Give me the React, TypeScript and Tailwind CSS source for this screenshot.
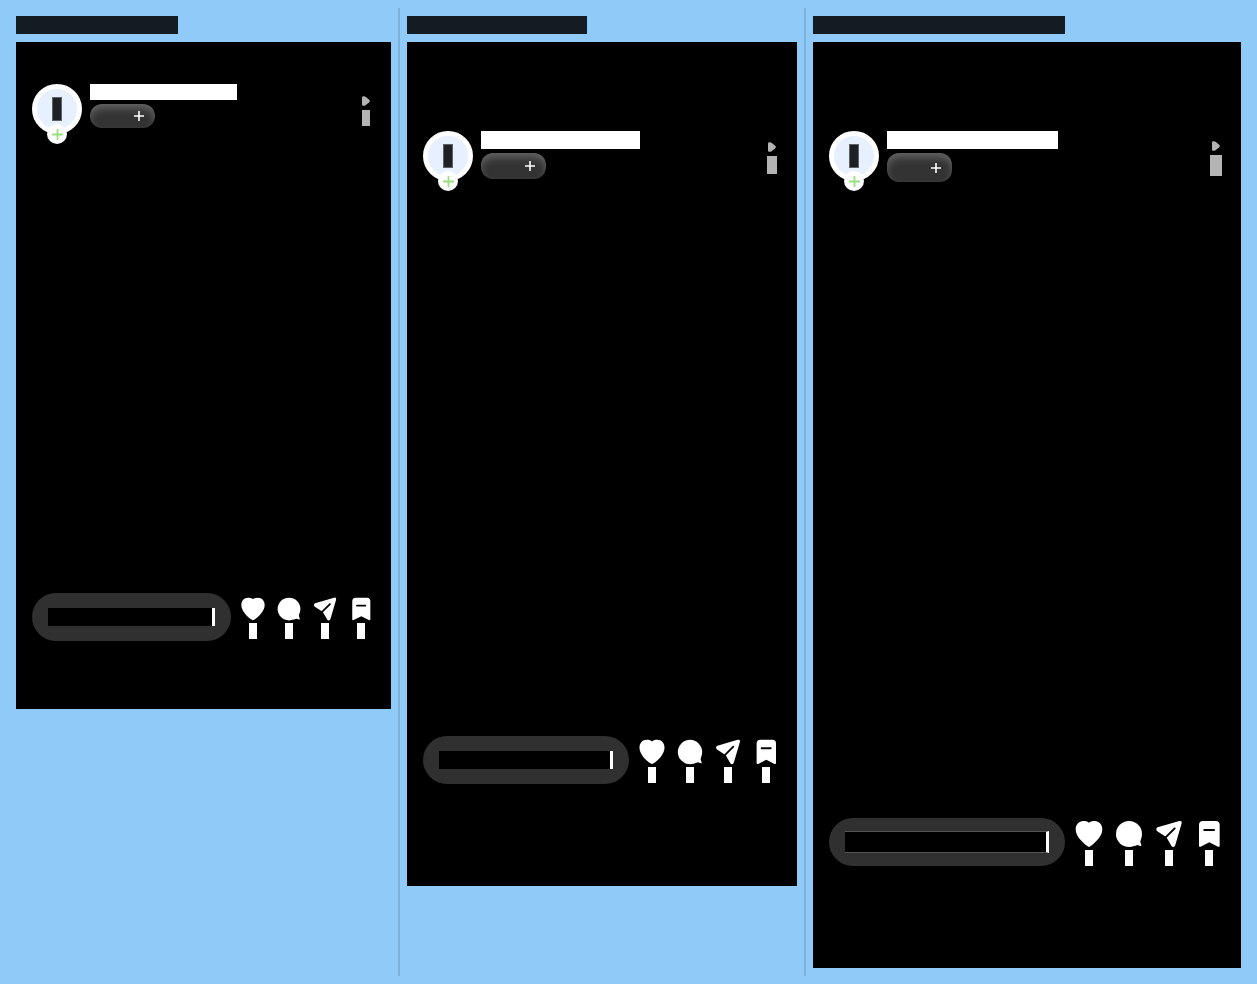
import React from "react";

type Device = {
  id: string;
  frame: string;
  label: string;
  name: string;
  pill: string;
  views: string;
  iconSize: string;
  cell: string;
  input: string;
};

const devices: Device[] = [
  {
    id: "small",
    frame: "aspect-[375/667] pt-[42px] pb-[68px]",
    label: "w-[162px]",
    name: "w-[147px] h-4",
    pill: "h-6",
    views: "w-2 h-4",
    iconSize: "size-7",
    cell: "w-9",
    input: "h-[18px]",
  },
  {
    id: "medium",
    frame: "aspect-[390/844] pt-[89px] pb-[102px]",
    label: "w-[180px]",
    name: "w-[159px] h-[18px]",
    pill: "h-[26px]",
    views: "w-[10px] h-[18px]",
    iconSize: "size-[30px]",
    cell: "w-[38px]",
    input: "h-[18px]",
  },
  {
    id: "large",
    frame: "aspect-[428/926] pt-[89px] pb-[102px]",
    label: "w-[252px]",
    name: "w-[171px] h-[18px]",
    pill: "h-[29px]",
    views: "w-3 h-[21px]",
    iconSize: "size-8",
    cell: "w-10",
    input: "h-[22px] border-y border-y-[#555555]",
  },
];

const actions: { label: string; drawing: React.ReactNode }[] = [
  {
    label: "Like",
    drawing: (
      <path d="M48 14C42 10 37 9 31 9C17 9 8 20 8 34C8 54 27 73 44 85Q48 88 52 85C69 73 88 54 88 34C88 20 79 9 65 9C59 9 54 10 48 14Z" />
    ),
  },
  {
    label: "Comment",
    drawing: (
      <>
        <circle cx="48" cy="48" r="39" />
        <path d="M83 62L82 72L85 81Q86 85 82 84L74 81L62 85Z" />
      </>
    ),
  },
  {
    label: "Share",
    drawing: (
      <>
        <path d="M14 28L79 9Q88 7 86 16L67 81Q65 87 61 87Q57 87 55 83L42 61L36 55L13 40Q9 37 10 33Q11 29 14 28Z" />
        <path d="M65 31L38 58" stroke="#000" strokeWidth="6" strokeLinecap="round" />
      </>
    ),
  },
  {
    label: "Save",
    drawing: (
      <>
        <path d="M18 21Q18 9 30 9H68Q80 9 80 21V83Q80 88 75 86L49 73L23 86Q18 88 18 83Z" />
        <path d="M34 36H63" stroke="#000" strokeWidth="6" strokeLinecap="round" />
      </>
    ),
  },
];

function Plus({ className }: { className: string }) {
  return (
    <svg viewBox="0 0 10 10" className={className} fill="none" stroke="currentColor" strokeWidth="1.6" strokeLinecap="round" aria-hidden="true">
      <path d="M5 0.5V9.5M0.5 5H9.5" />
    </svg>
  );
}

function Header({ device }: { device: Device }) {
  return (
    <header className="flex w-full gap-2 px-4">
      <button type="button" aria-label="Profile" className="relative flex size-[50px] shrink-0 items-center justify-center rounded-full border-[5px] border-white bg-[#e6f0ff]">
        <span className="h-6 w-[10px] border border-[#5d6269] bg-[#1f2224]" />
        <span className="absolute -bottom-[15px] left-[10px] flex size-5 items-center justify-center rounded-full bg-white text-[#96e07f]">
          <Plus className="size-[11px]" />
        </span>
      </button>
      <div className="flex flex-col items-start gap-1">
        <div className={`${device.name} bg-white`} />
        <button
          type="button"
          aria-label="Follow"
          className={`${device.pill} flex w-[65px] items-center justify-end rounded-xl bg-[#333333] pr-[11px] text-white shadow-[inset_0_5px_8px_-1px_rgba(255,255,255,0.25)]`}
        >
          <Plus className="size-[10px]" />
        </button>
      </div>
      <div className="ml-auto flex w-[18px] flex-col items-center justify-center gap-1 pt-1">
        <svg viewBox="0 0 8 10" className="h-[10px] w-2 fill-[#b3b3b3]" aria-hidden="true">
          <path d="M0 1.4Q0 0.2 1.2 0.2H2Q2.8 0.3 3.5 0.8L7.2 3.8Q8.5 5 7.2 6.2L3.5 9.2Q2.8 9.7 2 9.8H1.2Q0 9.8 0 8.6Z" />
        </svg>
        <div className={`${device.views} bg-[#b3b3b3]`} />
      </div>
    </header>
  );
}

function ActionBar({ device }: { device: Device }) {
  return (
    <footer className="flex h-12 items-center gap-1 pl-4 pr-3">
      <div className="flex h-12 min-w-0 flex-1 items-center rounded-full bg-[#303030] px-4">
        <input
          type="text"
          aria-label="Message"
          className={`${device.input} block w-full min-w-0 border-r-[3px] border-r-white bg-black text-sm text-white outline-none`}
        />
      </div>
      <div className="flex">
        {actions.map((action) => (
          <button key={action.label} type="button" aria-label={action.label} className={`${device.cell} flex flex-col items-center`}>
            <svg viewBox="0 0 96 96" className={`${device.iconSize} fill-white`} aria-hidden="true">
              {action.drawing}
            </svg>
            <span className="h-4 w-2 bg-white" />
          </button>
        ))}
      </div>
    </footer>
  );
}

function Phone({ device }: { device: Device }) {
  return (
    <section className="flex min-w-0 flex-col gap-2 py-2">
      <div className={`${device.label} h-[18px] max-w-full bg-[#131c22]`} />
      <div className={`${device.frame} flex w-full flex-col justify-between bg-black`}>
        <Header device={device} />
        <ActionBar device={device} />
      </div>
    </section>
  );
}

export default function App() {
  return (
    <main className="min-h-screen bg-[#90caf9] px-4 py-2 font-['Roboto',sans-serif]">
      <div className="grid grid-cols-[375fr_2px_390fr_2px_428fr] gap-x-[7px]">
        {devices.map((device, index) => (
          <React.Fragment key={device.id}>
            {index > 0 && <div className="bg-[#7eb1da]" />}
            <Phone device={device} />
          </React.Fragment>
        ))}
      </div>
    </main>
  );
}
